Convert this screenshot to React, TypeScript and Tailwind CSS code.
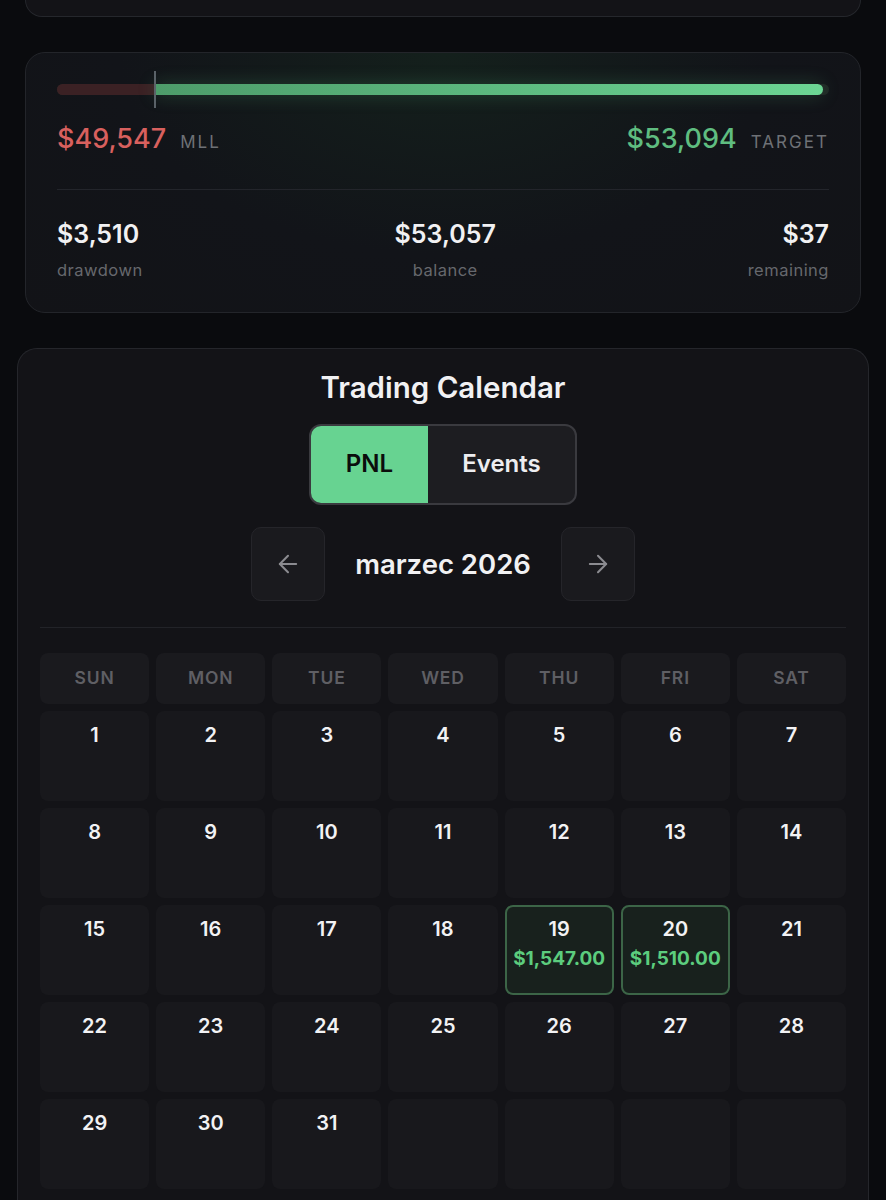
import { ArrowLeft, ArrowRight } from "lucide-react";

const WEEKDAYS = ["SUN", "MON", "TUE", "WED", "THU", "FRI", "SAT"];

// March 2026 starts on a Sunday, 31 days, padded to 5 full weeks
const DAYS: (number | null)[] = [
  ...Array.from({ length: 31 }, (_, i) => i + 1),
  null,
  null,
  null,
  null,
];

const PNL: Record<number, string> = {
  19: "$1,547.00",
  20: "$1,510.00",
};

function ProgressCard() {
  return (
    <div className="mx-[25px] mt-[35px] rounded-[20px] border border-[#23252a] bg-[radial-gradient(ellipse_at_50%_0%,#14201c_0%,#121419_55%,#121317_100%)] px-[31px] pt-[31px] pb-[32px]">
      {/* Progress track with MLL marker */}
      <div className="relative h-[11px]">
        <div className="absolute inset-0 rounded-full bg-[#1f2624]" />
        <div className="absolute left-0 top-0 h-full w-[98px] rounded-l-full bg-[#3b2124]" />
        <div className="absolute left-[98px] top-0 h-full w-[668px] rounded-r-full bg-gradient-to-r from-[#4d9c6a] to-[#6cd694] shadow-[0_0_18px_rgba(90,200,130,0.25)]" />
        <div className="absolute left-[97px] top-[-13px] h-[37px] w-[2px] bg-[#5a6268]" />
      </div>

      <div className="mt-[28px] flex items-baseline justify-between">
        <div className="flex items-baseline gap-[14px]">
          <span className="text-[27px] font-medium leading-[32px] text-[#d8605e]">$49,547</span>
          <span className="text-[17px] tracking-[0.12em] text-[#6e7176]">MLL</span>
        </div>
        <div className="flex items-baseline gap-[14px]">
          <span className="text-[27px] font-medium leading-[32px] text-[#5fbd80]">$53,094</span>
          <span className="text-[17px] tracking-[0.12em] text-[#6e7176]">TARGET</span>
        </div>
      </div>

      <div className="mt-[33px] h-px bg-[#23252b]" />

      <div className="mt-[30px] flex justify-between">
        <div className="flex flex-col items-start">
          <span className="text-[25px] font-semibold leading-[28px] text-[#f1f1f3]">$3,510</span>
          <span className="mt-[12px] text-[16.5px] leading-[20px] tracking-[0.03em] text-[#66686d]">drawdown</span>
        </div>
        <div className="flex flex-col items-center">
          <span className="text-[25px] font-semibold leading-[28px] text-[#f1f1f3]">$53,057</span>
          <span className="mt-[12px] text-[16.5px] leading-[20px] tracking-[0.03em] text-[#66686d]">balance</span>
        </div>
        <div className="flex flex-col items-end">
          <span className="text-[25px] font-semibold leading-[28px] text-[#f1f1f3]">$37</span>
          <span className="mt-[12px] text-[16.5px] leading-[20px] tracking-[0.03em] text-[#66686d]">remaining</span>
        </div>
      </div>
    </div>
  );
}

function DayCell({ day }: { day: number | null }) {
  const pnl = day ? PNL[day] : undefined;
  return (
    <div
      className={
        pnl
          ? "flex h-[90px] flex-col items-center rounded-[8px] border-2 border-[#3c6547] bg-[#18211d] pt-[10px]"
          : "flex h-[90px] flex-col items-center rounded-[8px] bg-[#18181c] pt-[12px]"
      }
    >
      {day && <span className="text-[20px] font-semibold leading-[24px] text-[#f2f2f4]">{day}</span>}
      {pnl && <span className="mt-[8px] text-[19px] font-bold leading-[20px] text-[#5ccd7e]">{pnl}</span>}
    </div>
  );
}

function TradingCalendar() {
  return (
    <div className="mx-[17px] mt-[35px] rounded-t-[20px] border border-b-0 border-[#25262b] bg-[#131317] px-[22px] pt-[20px] pb-[24px]">
      <h2 className="text-center text-[29.5px] font-semibold leading-[36px] text-[#f1f1f3]">Trading Calendar</h2>

      <div className="mt-[19px] flex justify-center">
        <div className="flex h-[81px] w-[268px] overflow-hidden rounded-[12px] border-2 border-[#3a3a3f] bg-[#1d1d21]">
          <button className="w-[117px] bg-[#67d391] text-[24px] font-semibold text-[#0b0d0c]">PNL</button>
          <button className="flex-1 text-[24px] font-semibold text-[#ededf0]">Events</button>
        </div>
      </div>

      <div className="mt-[22px] flex items-center justify-center gap-[30px]">
        <button className="flex h-[74px] w-[74px] items-center justify-center rounded-[10px] border border-[#25252a] bg-[#1a1a1e]">
          <ArrowLeft className="h-[28px] w-[28px] text-[#8b8b90]" strokeWidth={1.75} />
        </button>
        <span className="w-[176px] text-center text-[27.5px] font-semibold leading-[32px] text-[#f1f1f3]">marzec 2026</span>
        <button className="flex h-[74px] w-[74px] items-center justify-center rounded-[10px] border border-[#25252a] bg-[#1a1a1e]">
          <ArrowRight className="h-[28px] w-[28px] text-[#8b8b90]" strokeWidth={1.75} />
        </button>
      </div>

      <div className="mt-[26px] h-px bg-[#222328]" />

      <div className="mt-[25px] grid grid-cols-7 gap-[7px]">
        {WEEKDAYS.map((d) => (
          <div
            key={d}
            className="flex h-[51px] items-center justify-center rounded-[8px] bg-[#1a1a1e] text-[17.5px] font-semibold tracking-[0.05em] text-[#5f5f64]"
          >
            {d}
          </div>
        ))}
        {DAYS.map((day, i) => (
          <DayCell key={i} day={day} />
        ))}
      </div>
    </div>
  );
}

export default function App() {
  return (
    <div className="min-h-[1200px] overflow-hidden bg-[#0a0b0e] font-['Inter','Noto_Sans',sans-serif]">
      <div className="mx-[25px] h-[17px] rounded-b-[20px] border border-t-0 border-[#25272c] bg-[#131317]" />
      <ProgressCard />
      <TradingCalendar />
    </div>
  );
}
